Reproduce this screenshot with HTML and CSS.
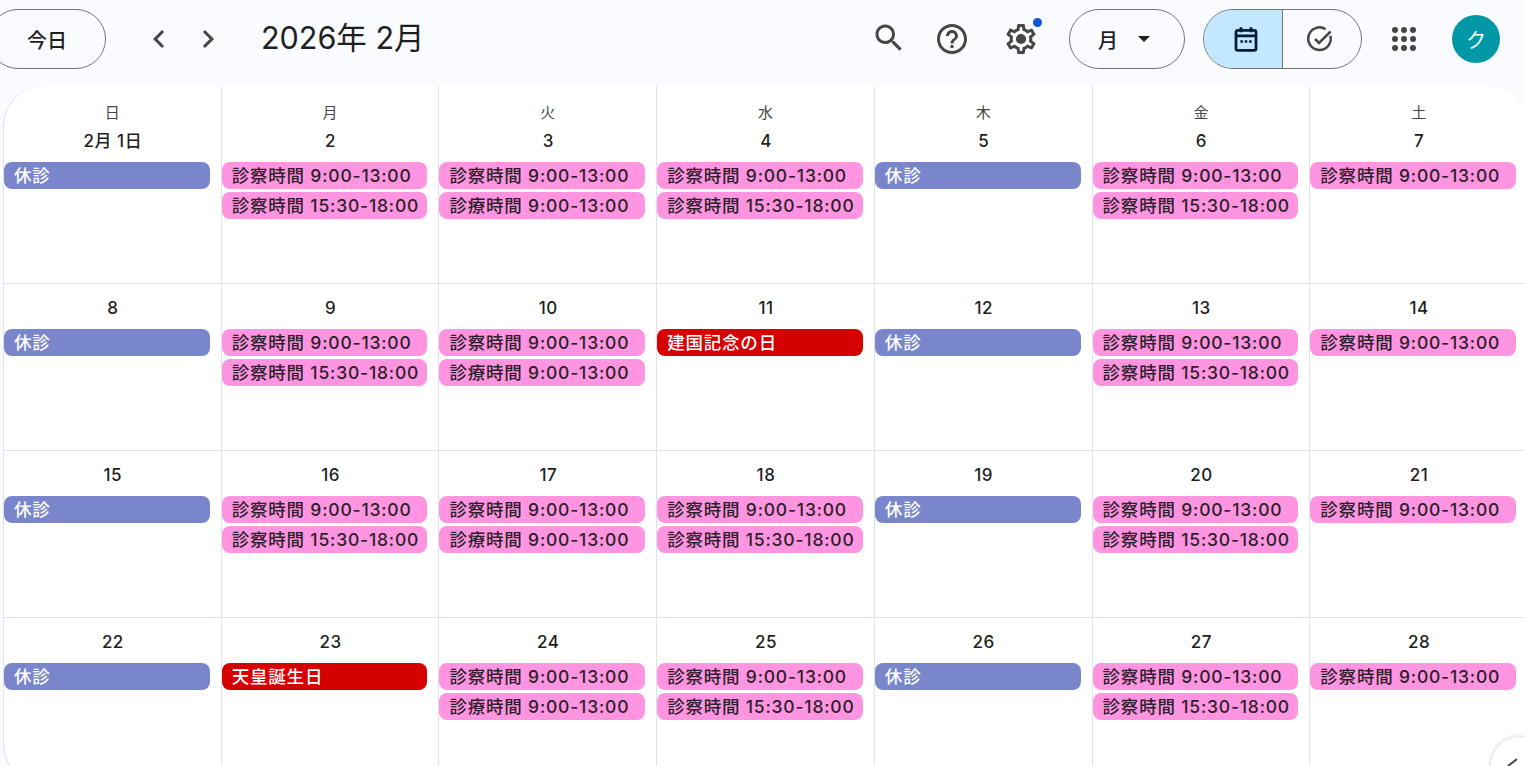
FILE: index.html
```html
<!DOCTYPE html>
<html lang="ja">
<head>
<meta charset="utf-8">
<title>カレンダー</title>
<link rel="stylesheet" href="styles.css">
</head>
<body>
<header class="bar">
  <button class="pill today">今日</button>
  <div class="nav">
    <svg class="chev" viewBox="0 0 24 24"><path d="M15.41 7.41 14 6l-6 6 6 6 1.41-1.41L10.83 12z"/></svg>
    <svg class="chev" viewBox="0 0 24 24"><path d="M10 6 8.59 7.41 13.17 12l-4.58 4.59L10 18l6-6z"/></svg>
  </div>
  <h1 class="title">2026年 2月</h1>
  <div class="tools">
    <svg class="icon search" viewBox="0 0 24 24"><path d="M15.5 14h-.79l-.28-.27C15.41 12.59 16 11.11 16 9.5 16 5.91 13.09 3 9.5 3S3 5.91 3 9.5 5.91 16 9.5 16c1.61 0 3.09-.59 4.23-1.57l.27.28v.79l5 4.99L20.49 19l-4.99-5zm-6 0C7.01 14 5 11.99 5 9.5S7.01 5 9.5 5 14 7.01 14 9.5 11.99 14 9.5 14z"/></svg>
    <svg class="icon help" viewBox="0 0 24 24"><path d="M11 18h2v-2h-2v2zm1-16C6.48 2 2 6.48 2 12s4.48 10 10 10 10-4.48 10-10S17.52 2 12 2zm0 18c-4.41 0-8-3.59-8-8s3.59-8 8-8 8 3.59 8 8-3.59 8-8 8zm0-14c-2.21 0-4 1.79-4 4h2c0-1.1.9-2 2-2s2 .9 2 2c0 2-3 1.75-3 5h2c0-2.25 3-2.5 3-5 0-2.21-1.79-4-4-4z"/></svg>
    <div class="gear">
      <svg class="icon" viewBox="0 0 24 24"><path d="M19.43 12.98c.04-.32.07-.64.07-.98 0-.34-.03-.66-.07-.98l2.11-1.65c.19-.15.24-.42.12-.64l-2-3.46c-.09-.16-.26-.25-.44-.25-.06 0-.12.01-.17.03l-2.49 1c-.52-.4-1.08-.73-1.69-.98l-.38-2.65C14.46 2.18 14.25 2 14 2h-4c-.25 0-.46.18-.49.42l-.38 2.65c-.61.25-1.17.59-1.69.98l-2.49-1c-.06-.02-.12-.03-.18-.03-.17 0-.34.09-.43.25l-2 3.46c-.13.22-.07.49.12.64l2.11 1.65c-.04.32-.07.65-.07.98 0 .33.03.66.07.98l-2.11 1.65c-.19.15-.24.42-.12.64l2 3.46c.09.16.26.25.44.25.06 0 .12-.01.17-.03l2.49-1c.52.4 1.08.73 1.69.98l.38 2.65c.03.24.24.42.49.42h4c.25 0 .46-.18.49-.42l.38-2.65c.61-.25 1.17-.59 1.69-.98l2.49 1c.06.02.12.03.18.03.17 0 .34-.09.43-.25l2-3.46c.12-.22.07-.49-.12-.64l-2.11-1.65zm-1.98-1.71c.04.31.05.52.05.73 0 .21-.02.43-.05.73l-.14 1.13.89.7 1.08.84-.7 1.21-1.27-.51-1.04-.42-.9.68c-.43.32-.84.56-1.25.73l-1.06.43-.16 1.13-.2 1.35h-1.4l-.19-1.35-.16-1.13-1.06-.43c-.43-.18-.83-.41-1.23-.71l-.91-.7-1.06.43-1.27.51-.7-1.21 1.08-.84.89-.7-.14-1.13c-.03-.31-.05-.54-.05-.74s.02-.43.05-.73l.14-1.13-.89-.7-1.08-.84.7-1.21 1.27.51 1.04.42.9-.68c.43-.32.84-.56 1.25-.73l1.06-.43.16-1.13.2-1.35h1.39l.19 1.35.16 1.13 1.06.43c.43.18.83.41 1.23.71l.91.7 1.06-.43 1.27-.51.7 1.21-1.07.85-.89.7.14 1.13z"/><circle cx="12" cy="12" r="3.4"/></svg>
      <span class="dot"></span>
    </div>
    <button class="pill view">月<svg class="caret" viewBox="0 0 10 5"><path d="M0 0h10L5 5z"/></svg></button>
    <div class="switch">
      <span class="seg on">
        <svg class="segicon" viewBox="0 0 24 24"><path class="cal" d="M5.500 5h13A1.500 1.500 0 0 1 20 6.500v13a1.500 1.500 0 0 1-1.500 1.500h-13A1.500 1.500 0 0 1 4 19.500v-13A1.500 1.500 0 0 1 5.500 5zM4 9.500h16M8 2.500v4M16 2.500v4"/><path class="caldots" d="M7.500 13h2v2h-2zM11 13h2v2h-2zM14.500 13h2v2h-2z"/></svg>
      </span>
      <span class="seg off-seg">
        <svg class="segicon" viewBox="0 0 24 24"><path class="task" d="M20.300 9.500A9 9 0 1 1 16.500 4.200M8 12l3.200 3.200L20.500 6"/></svg>
      </span>
    </div>
    <svg class="apps" viewBox="0 0 24 24"><circle cx="3" cy="3" r="3"/><circle cx="12" cy="3" r="3"/><circle cx="21" cy="3" r="3"/><circle cx="3" cy="12" r="3"/><circle cx="12" cy="12" r="3"/><circle cx="21" cy="12" r="3"/><circle cx="3" cy="21" r="3"/><circle cx="12" cy="21" r="3"/><circle cx="21" cy="21" r="3"/></svg>
    <div class="avatar">ク</div>
  </div>
</header>

<main class="month">
  <section class="cell first"><div class="dow">日</div><div class="date">2月 1日</div><div class="ev off">休診</div></section>
  <section class="cell first"><div class="dow">月</div><div class="date">2</div><div class="ev pink">診察時間 9:00-13:00</div><div class="ev pink">診察時間 15:30-18:00</div></section>
  <section class="cell first"><div class="dow">火</div><div class="date">3</div><div class="ev pink">診察時間 9:00-13:00</div><div class="ev pink">診療時間 9:00-13:00</div></section>
  <section class="cell first"><div class="dow">水</div><div class="date">4</div><div class="ev pink">診察時間 9:00-13:00</div><div class="ev pink">診察時間 15:30-18:00</div></section>
  <section class="cell first"><div class="dow">木</div><div class="date">5</div><div class="ev off">休診</div></section>
  <section class="cell first"><div class="dow">金</div><div class="date">6</div><div class="ev pink">診察時間 9:00-13:00</div><div class="ev pink">診察時間 15:30-18:00</div></section>
  <section class="cell first"><div class="dow">土</div><div class="date">7</div><div class="ev pink">診察時間 9:00-13:00</div></section>

  <section class="cell"><div class="date">8</div><div class="ev off">休診</div></section>
  <section class="cell"><div class="date">9</div><div class="ev pink">診察時間 9:00-13:00</div><div class="ev pink">診察時間 15:30-18:00</div></section>
  <section class="cell"><div class="date">10</div><div class="ev pink">診察時間 9:00-13:00</div><div class="ev pink">診療時間 9:00-13:00</div></section>
  <section class="cell"><div class="date">11</div><div class="ev red">建国記念の日</div></section>
  <section class="cell"><div class="date">12</div><div class="ev off">休診</div></section>
  <section class="cell"><div class="date">13</div><div class="ev pink">診察時間 9:00-13:00</div><div class="ev pink">診察時間 15:30-18:00</div></section>
  <section class="cell"><div class="date">14</div><div class="ev pink">診察時間 9:00-13:00</div></section>

  <section class="cell"><div class="date">15</div><div class="ev off">休診</div></section>
  <section class="cell"><div class="date">16</div><div class="ev pink">診察時間 9:00-13:00</div><div class="ev pink">診察時間 15:30-18:00</div></section>
  <section class="cell"><div class="date">17</div><div class="ev pink">診察時間 9:00-13:00</div><div class="ev pink">診療時間 9:00-13:00</div></section>
  <section class="cell"><div class="date">18</div><div class="ev pink">診察時間 9:00-13:00</div><div class="ev pink">診察時間 15:30-18:00</div></section>
  <section class="cell"><div class="date">19</div><div class="ev off">休診</div></section>
  <section class="cell"><div class="date">20</div><div class="ev pink">診察時間 9:00-13:00</div><div class="ev pink">診察時間 15:30-18:00</div></section>
  <section class="cell"><div class="date">21</div><div class="ev pink">診察時間 9:00-13:00</div></section>

  <section class="cell"><div class="date">22</div><div class="ev off">休診</div></section>
  <section class="cell"><div class="date">23</div><div class="ev red">天皇誕生日</div></section>
  <section class="cell"><div class="date">24</div><div class="ev pink">診察時間 9:00-13:00</div><div class="ev pink">診療時間 9:00-13:00</div></section>
  <section class="cell"><div class="date">25</div><div class="ev pink">診察時間 9:00-13:00</div><div class="ev pink">診察時間 15:30-18:00</div></section>
  <section class="cell"><div class="date">26</div><div class="ev off">休診</div></section>
  <section class="cell"><div class="date">27</div><div class="ev pink">診察時間 9:00-13:00</div><div class="ev pink">診察時間 15:30-18:00</div></section>
  <section class="cell"><div class="date">28</div><div class="ev pink">診察時間 9:00-13:00</div></section>
</main>

<button class="fab"><svg viewBox="0 0 24 24"><path d="M1 13 10 6"/></svg></button>
</body>
</html>
```
FILE: styles.css
```css
* { box-sizing: border-box; }
html, body { margin: 0; height: 766px; overflow: hidden; }
body {
  width: 1524px;
  position: relative;
  background: #f9fbff;
  color: #1f1f1f;
  font-family: Inter, "Noto Sans CJK JP", sans-serif;
}
button { font-family: inherit; color: inherit; background: none; padding: 0; }

.bar { height: 86px; display: flex; align-items: flex-start; }
.pill { height: 60px; border: 1px solid #747775; border-radius: 30px; font-size: 20px; font-weight: 500; margin-top: 9px; }
.today { width: 118px; margin-left: -12px; flex: none; }
.nav { display: flex; gap: 13px; margin: 21px 0 0 35px; }
.chev { width: 36px; height: 36px; fill: #444746; display: block; }
.title { font-size: 30.500px; font-weight: 400; margin: 14px 0 0 35px; line-height: 48px; white-space: nowrap; }

.tools { margin-left: auto; display: flex; align-items: flex-start; }
.icon { width: 36px; height: 36px; fill: #444746; display: block; }
.search { margin-top: 20px; margin-right: 27px; }
.help { margin-top: 21px; margin-right: 33px; }
.gear { position: relative; margin-top: 21px; margin-right: 30px; }
.dot { position: absolute; width: 9px; height: 9px; border-radius: 50%; background: #0b57d0; right: -3px; top: -3px; }
.view { width: 116px; display: flex; align-items: center; justify-content: center; gap: 20px; padding-right: 6px; }
.caret { width: 12px; height: 6px; fill: #1f1f1f; }
.switch { display: flex; margin: 9px 0 0 18px; height: 60px; width: 159px; border: 1px solid #747775; border-radius: 30px; overflow: hidden; }
.seg { flex: 1; display: flex; align-items: center; justify-content: center; }
.seg.on { background: #c2e7ff; border-right: 1px solid #747775; padding-left: 5px; }
.seg.off-seg { padding-right: 5px; }
.segicon { width: 30px; height: 30px; fill: none; }
.cal { fill: none; stroke: #001d35; stroke-width: 2.200; }
.caldots { fill: #001d35; }
.task { fill: none; stroke: #444746; stroke-width: 2; }
.apps { width: 24px; height: 24px; fill: #444746; margin: 27px 0 0 30px; }
.avatar { width: 48px; height: 48px; border-radius: 50%; background: #0097a7; color: #fff; font-size: 20px; display: flex; align-items: center; justify-content: center; margin: 15px 24px 0 36px; }

.month {
  width: 1524px;
  margin-left: 3px;
  height: 698px;
  background: #fff;
  border-radius: 40px;
  display: grid;
  grid-template-columns: repeat(7, 1fr);
  grid-template-rows: 197px 167px 167px 167px;
  box-shadow: inset 1px 0 0 #dde3ea;
  overflow: hidden;
}
.cell { border-left: 1px solid #dde3ea; border-top: 1px solid #dde3ea; padding: 0 11px 0 0; display: flex; flex-direction: column; min-width: 0; }
.cell:nth-child(7n+1) { border-left-color: transparent; }
.first { padding-top: 17px; border-top: 0; }
.dow { height: 19px; line-height: 19px; font-size: 15px; color: #444746; text-align: center; padding-left: 11px; }
.date { height: 45px; padding-top: 11px; line-height: 26px; font-size: 17px; font-weight: 500; letter-spacing: .5px; text-align: center; padding-left: 12px; }
.first .date { height: 40px; padding-top: 6px; }
.ev { height: 27px; line-height: 28px; border-radius: 8px; padding-left: 10px; margin-bottom: 3px; font-size: 17.500px; font-weight: 500; letter-spacing: .8px; white-space: nowrap; overflow: hidden; }
.pink { background: #ff94e0; color: #2a1f2a; }
.off { background: #7986cb; color: #fff; }
.red { background: #d50000; color: #fff; }

.fab { position: absolute; left: 1491px; top: 737px; width: 56px; height: 56px; border-radius: 50%; border: 0; background: #fff; box-shadow: 0 0 4px rgba(60,64,67,.3); }
.fab svg { position: absolute; left: 16px; top: 16px; width: 24px; height: 24px; fill: none; stroke: #444746; stroke-width: 2; }
```
